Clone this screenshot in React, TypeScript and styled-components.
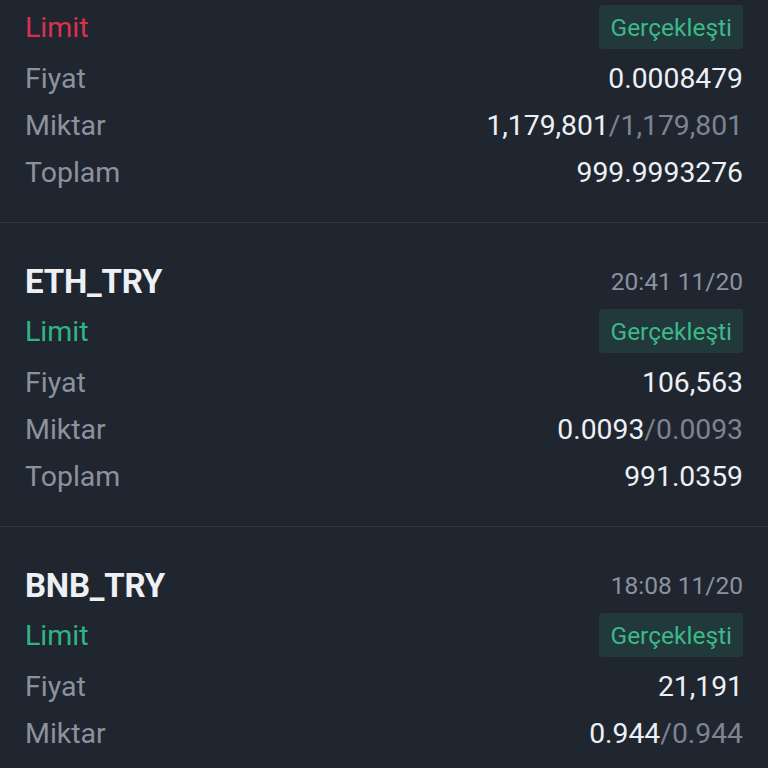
import React from 'react';
import styled, { createGlobalStyle } from 'styled-components';

const GlobalStyle = createGlobalStyle`
  html, body {
    margin: 0;
    padding: 0;
    background: #1f2630;
  }
  body {
    font-family: Roboto, "Noto Sans", "Liberation Sans", sans-serif;
    -webkit-font-smoothing: antialiased;
  }
`;

interface Order {
  pair: string;
  time: string;
  side: 'buy' | 'sell';
  price: string;
  filled: string;
  amount: string;
  total?: string;
}

const orders: Order[] = [
  { pair: 'SHIB_TRY', time: '21:02 11/20', side: 'sell', price: '0.0008479', filled: '1,179,801', amount: '1,179,801', total: '999.9993276' },
  { pair: 'ETH_TRY', time: '20:41 11/20', side: 'buy', price: '106,563', filled: '0.0093', amount: '0.0093', total: '991.0359' },
  { pair: 'BNB_TRY', time: '18:08 11/20', side: 'buy', price: '21,191', filled: '0.944', amount: '0.944', total: '1,000.27' },
];

const Screen = styled.div`
  width: 768px;
  height: 768px;
  overflow: hidden;
  background: #1f2630;
`;

// first card is scrolled partly out of view
const List = styled.div`
  display: flex;
  flex-direction: column;
  margin-top: -81px;
`;

const Card = styled.div`
  display: flex;
  flex-direction: column;
  padding: 40px 25px 26px;
  border-bottom: 1px solid #2f3642;
`;

const Header = styled.div`
  display: flex;
  justify-content: space-between;
  align-items: center;
  height: 36px;
`;

const Pair = styled.span`
  font-size: 33px;
  font-weight: 700;
  color: #eef0f4;
  letter-spacing: -0.2px;
`;

const Time = styled.span`
  font-size: 24.5px;
  color: #8b929e;
`;

const TypeRow = styled.div`
  display: flex;
  justify-content: space-between;
  align-items: center;
  height: 44px;
  margin-top: 10px;
  margin-bottom: 6px;
`;

const Side = styled.span<{ $side: 'buy' | 'sell' }>`
  font-size: 28.5px;
  color: ${p => (p.$side === 'buy' ? '#33b383' : '#d8324f')};
`;

const Badge = styled.span`
  display: flex;
  align-items: center;
  height: 44px;
  padding: 0 11px;
  border-radius: 3px;
  background: #21393a;
  color: #3cb88a;
  font-size: 24.5px;
`;

const Row = styled.div`
  display: flex;
  justify-content: space-between;
  align-items: center;
  height: 47px;
`;

const Label = styled.span`
  font-size: 28.5px;
  color: #8b929e;
`;

const Value = styled.span`
  font-size: 28.3px;
  color: #eef0f4;
`;

const Muted = styled.span`
  color: #7d8490;
`;

const OrderCard: React.FC<{ order: Order }> = ({ order }) => (
  <Card>
    <Header>
      <Pair>{order.pair}</Pair>
      <Time>{order.time}</Time>
    </Header>
    <TypeRow>
      <Side $side={order.side}>Limit</Side>
      <Badge>Gerçekleşti</Badge>
    </TypeRow>
    <Row>
      <Label>Fiyat</Label>
      <Value>{order.price}</Value>
    </Row>
    <Row>
      <Label>Miktar</Label>
      <Value>
        {order.filled}
        <Muted>/{order.amount}</Muted>
      </Value>
    </Row>
    {order.total && (
      <Row>
        <Label>Toplam</Label>
        <Value>{order.total}</Value>
      </Row>
    )}
  </Card>
);

export default function App() {
  return (
    <>
      <GlobalStyle />
      <Screen>
        <List>
          {orders.map(o => (
            <OrderCard key={o.pair} order={o} />
          ))}
        </List>
      </Screen>
    </>
  );
}
